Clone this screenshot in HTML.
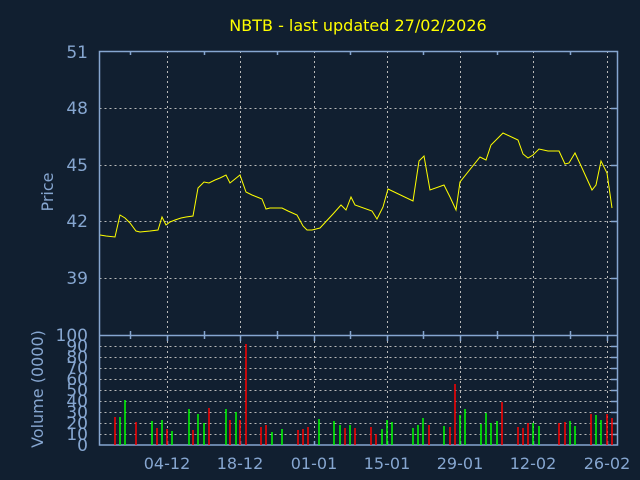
<!DOCTYPE html>
<html><head><meta charset="utf-8"><style>
html,body{margin:0;padding:0;background:#111f30;}
svg{display:block}
text{font-family:"DejaVu Sans","Liberation Sans",sans-serif;}
</style></head><body>
<svg width="640" height="480" viewBox="0 0 640 480" xmlns="http://www.w3.org/2000/svg">
<rect width="640" height="480" fill="#111f30"/>
<text x="358" y="31" fill="#ffff00" font-size="16" text-anchor="middle">NBTB - last updated 27/02/2026</text>
<g stroke="#b8b8b8" stroke-width="1" stroke-dasharray="2,3" fill="none">
<path d="M99.5 108.5H617M99.5 165.5H617M99.5 221.5H617M99.5 278.5H617"/>
<path d="M167.5 51V445M240.5 51V445M314.5 51V445M387.5 51V445M460.5 51V445M533.5 51V445M607.5 51V445"/>
<path d="M99.5 346.5H617M99.5 357.5H617M99.5 368.5H617M99.5 379.5H617M99.5 390.5H617M99.5 401.5H617M99.5 412.5H617M99.5 423.5H617M99.5 434.5H617"/>
</g>
<g stroke="#86a6d0" stroke-width="1.5" fill="none">
<rect x="99.5" y="51.5" width="518" height="393.5"/>
<path d="M99.5 335.5H617.5"/>
<path d="M130.5 51V55M204.5 51V55M277.5 51V55M350.5 51V55M423.5 51V55M497.5 51V55M570.5 51V55"/>
<path d="M130.5 335V331M204.5 335V331M277.5 335V331M350.5 335V331M423.5 335V331M497.5 335V331M570.5 335V331"/>
<path d="M130.5 335V339M204.5 335V339M277.5 335V339M350.5 335V339M423.5 335V339M497.5 335V339M570.5 335V339"/>
<path d="M167.5 335V341M240.5 335V341M314.5 335V341M387.5 335V341M460.5 335V341M533.5 335V341M607.5 335V341"/>
<path d="M167.5 445V441M240.5 445V441M314.5 445V441M387.5 445V441M460.5 445V441M533.5 445V441M607.5 445V441"/>
<path d="M617 108.5H611M617 165.5H611M617 221.5H611M617 278.5H611M617 346.5H611M617 357.5H611M617 368.5H611M617 379.5H611M617 390.5H611M617 401.5H611M617 412.5H611M617 423.5H611M617 434.5H611"/>
</g>
<polyline fill="none" stroke="#ffff00" stroke-width="1" points="100,235 106,236 115,237 120,215 125,218 130,223 136,231 140,232 150,231 158,230 162,217 166,225 170,222 175,220 181,218 186,217 193,216 198,188 204,182 209,183 215,180 220,178 226,175 230,183 235,179 240,175 246,192 252,195 257,197 262,199 266,209 270,208 282,208 288,211 297,215 303,226 307,230 312,230 320,228 333,214 341,205 346,210 351,197 355,205 372,211 377,219 383,207 388,189 413,201 419,161 424,156 430,190 444,185 450,197 456,210 460,182 480,157 486,160 491,145 503,133 518,140 523,154 528,158 533,155 539,149 548,151 559,151 565,164 569,163 575,153 582,168 592,190 596,185 601,161 607,173 612,208"/>
<g stroke-width="1.5">
<g stroke="#ff0000">
<path d="M115 445V417M136 445V422M157 445V428M167 445V429M193 445V430M209 445V408M230 445V420M240 445V420M246 445V344M261 445V427M266 445V425M298 445V430M303 445V429M308 445V427M345 445V428M355 445V428M371 445V427M376 445V434M429 445V425M450 445V427M455 445V384M502 445V402M518 445V427M523 445V428M528 445V423M559 445V423M565 445V422M591 445V414M607 445V414M612 445V418"/>
</g>
<g stroke="#00ff00">
<path d="M120 445V417M125 445V400M152 445V421M162 445V420M172 445V431M189 445V409M198 445V414M204 445V423M226 445V409M236 445V412M272 445V432M282 445V429M319 445V419M334 445V421M340 445V425M350 445V425M382 445V429M387 445V420M392 445V422M413 445V428M418 445V425M423 445V418M444 445V426M460 445V415M465 445V409M481 445V424M486 445V413M491 445V423M497 445V421M533 445V423M539 445V426M570 445V421M575 445V426M596 445V415M601 445V420"/>
</g>
</g>
<g fill="#86a6d0" font-size="17" text-anchor="end">
<text x="88" y="58">51</text>
<text x="88" y="114">48</text>
<text x="88" y="171">45</text>
<text x="88" y="227">42</text>
<text x="88" y="284">39</text>
<text x="88" y="341">100</text>
<text x="88" y="352">90</text>
<text x="88" y="363">80</text>
<text x="88" y="374">70</text>
<text x="88" y="385">60</text>
<text x="88" y="396">50</text>
<text x="88" y="407">40</text>
<text x="88" y="418">30</text>
<text x="88" y="429">20</text>
<text x="88" y="440">10</text>
<text x="88" y="451">0</text>
</g>
<g fill="#86a6d0" font-size="16" text-anchor="middle">
<text x="167" y="469">04-12</text>
<text x="240" y="469">18-12</text>
<text x="314" y="469">01-01</text>
<text x="387" y="469">15-01</text>
<text x="460" y="469">29-01</text>
<text x="533" y="469">12-02</text>
<text x="607" y="469">26-02</text>
</g>
<text transform="translate(53,192) rotate(-90)" fill="#86a6d0" font-size="16" text-anchor="middle">Price</text>
<text transform="translate(43,389) rotate(-90)" fill="#86a6d0" font-size="16" text-anchor="middle">Volume (0000)</text>
</svg>
</body></html>
